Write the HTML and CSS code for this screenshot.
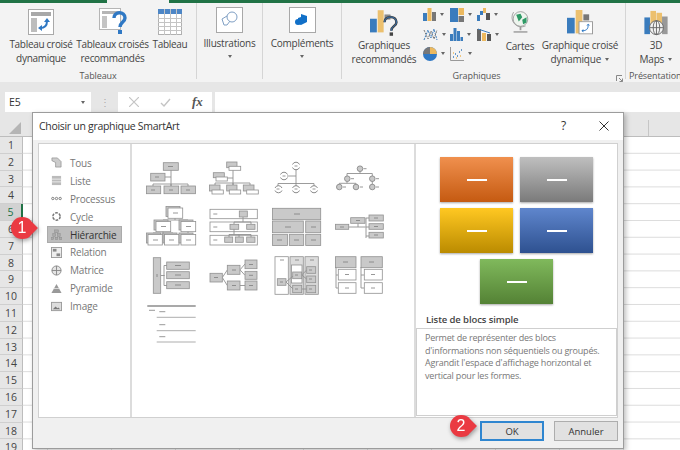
FILE: index.html
```html
<!DOCTYPE html>
<html lang="fr">
<head>
<meta charset="utf-8">
<title>Choisir un graphique SmartArt</title>
<link rel="stylesheet" href="styles.css">
</head>
<body>
<div class="app">
  <div class="greenbar"><div class="g1"></div><div class="g2"></div></div>
  <div class="ribbon">
    <div class="group g-tab">
      <div class="btns">
        <div class="btn b1">
          <svg width="26" height="26" viewBox="0 0 26 26"><rect x=".5" y=".5" width="25" height="25" fill="#fff" stroke="#a9a9a9"/><rect x="3" y="3" width="20" height="4" fill="#a8a8a8"/><rect x="3" y="9" width="6" height="14" fill="#bdbdbd"/><path d="M12 19c5 0 7-3 7-7" fill="none" stroke="#2f78c4" stroke-width="2"/><path d="M16 13l3-4 3 4zM14 16l-4 3 4 3z" fill="#2f78c4"/></svg>
          <span>Tableau croisé<br>dynamique</span>
        </div>
        <div class="btn b2">
          <svg width="28" height="28" viewBox="0 0 28 28"><rect x=".5" y=".5" width="21" height="21" fill="#fff" stroke="#b5b5b5"/><rect x="3" y="3" width="17" height="3" fill="#b5b5b5"/><rect x="3" y="8" width="5" height="12" fill="#c4c4c4"/><path d="M15 10c0-7 11-7 11 0 0 4-5 4-5 9" fill="none" stroke="#2f78c4" stroke-width="3.4"/><rect x="19" y="22" width="4" height="4" fill="#2f78c4"/></svg>
          <span>Tableaux croisés<br>recommandés</span>
        </div>
        <div class="btn b3">
          <svg width="24" height="26" viewBox="0 0 24 26"><rect x=".5" y=".5" width="23" height="25" fill="#fff" stroke="#b0b0b0"/><rect width="24" height="5" fill="#4d86c6"/><path d="M0 9.500h24M0 13.500h24M0 17.500h24M0 21.500h24M6.500 0v26M12.500 0v26M18.500 0v26" stroke="#c4c4c4"/></svg>
          <span>Tableau</span>
        </div>
      </div>
      <div class="glabel">Tableaux</div>
    </div>
    <div class="group g-ill">
      <div class="btn b4">
        <div class="boxic"><svg width="18" height="18" viewBox="0 0 18 18"><path d="M1 8l5-3 3 5-3 4H3z" fill="#fff" stroke="#7f9fc4"/><circle cx="11" cy="6" r="5" fill="#fff" stroke="#7f9fc4"/></svg></div>
        <span>Illustrations</span><i class="caret"></i>
      </div>
    </div>
    <div class="group g-com">
      <div class="btn b5">
        <div class="boxic"><svg width="14" height="14" viewBox="0 0 14 14"><path d="M6 1l6 2v6l-6 3-3-1V5l3-1z" fill="#1170c8"/><circle cx="3" cy="9" r="3" fill="#1170c8"/></svg></div>
        <span>Compléments</span><i class="caret"></i>
      </div>
    </div>
    <div class="group g-gra">
      <div class="btns">
        <div class="btn b6">
          <svg width="29" height="26" viewBox="0 0 34 30"><rect x="0" y="10" width="8" height="16" fill="#3a7cbd"/><rect x="9" y="0" width="7" height="26" fill="#ecc06e"/><rect x="17" y="5" width="7" height="6" fill="#8a8a8a"/><path d="M17 14c0-8 14-8 14 0 0 5-6 4-6 10" fill="none" stroke="#444" stroke-width="3"/><path d="M17 14c0-8 14-8 14 0 0 5-6 4-6 10" fill="none" stroke="#2f78c4" stroke-width="1"/><rect x="23" y="26" width="4" height="4" fill="#444"/></svg>
          <span>Graphiques<br>recommandés</span>
        </div>
        <div class="minis">
          <div class="mini"><svg width="13" height="13" viewBox="0 0 13 13"><rect y="5" width="4" height="8" fill="#3a7cbd"/><rect x="4.500" width="4" height="13" fill="#ecb95f"/><rect x="9" y="4" width="4" height="9" fill="#777"/></svg><i class="caret"></i></div>
          <div class="mini"><svg width="14" height="14" viewBox="0 0 14 14"><rect width="8" height="14" fill="#3a7cbd"/><rect x="8.500" width="5.500" height="7" fill="#ecb95f"/><rect x="8.500" y="8" width="5.500" height="6" fill="#777"/></svg><i class="caret"></i></div>
          <div class="mini"><svg width="13" height="13" viewBox="0 0 13 13"><rect y="7" width="3" height="6" fill="#3a7cbd"/><rect x="3" y="3" width="3" height="4" fill="#3a7cbd"/><rect x="6" width="3" height="5" fill="#ecb95f"/><rect x="9" y="5" width="4" height="7" fill="#555"/></svg><i class="caret"></i></div>
          <div class="mini"><svg width="15" height="13" viewBox="0 0 15 13"><path d="M1 12L5 2l3 8 3-9 3 11" fill="none" stroke="#3a7cbd" stroke-dasharray="2 1"/><path d="M1 2l4 9 3-8 3 8 3-9" fill="none" stroke="#777" stroke-dasharray="2 1"/></svg><i class="caret"></i></div>
          <div class="mini"><svg width="13" height="13" viewBox="0 0 13 13"><rect y="6" width="3" height="7" fill="#3a7cbd"/><rect x="3.500" width="3" height="13" fill="#3a7cbd"/><rect x="7" y="3" width="3" height="10" fill="#3a7cbd"/><rect x="10.500" y="9" width="2.500" height="4" fill="#3a7cbd"/></svg><i class="caret"></i></div>
          <div class="mini"><svg width="14" height="13" viewBox="0 0 14 13"><rect y="1" width="4" height="12" fill="#666"/><rect x="5" y="5" width="4" height="8" fill="#ecb95f"/><rect x="10" y="6" width="4" height="7" fill="#555"/><path d="M1 1l12 4" stroke="#3a7cbd"/></svg><i class="caret"></i></div>
          <div class="mini"><svg width="14" height="14" viewBox="0 0 14 14"><circle cx="7" cy="7" r="7" fill="#2f78c4"/><path d="M7 7V0a7 7 0 0 1 7 7z" fill="#ecb95f"/><path d="M7 7H0a7 7 0 0 1 7-7z" fill="#777"/></svg><i class="caret"></i></div>
          <div class="mini"><svg width="14" height="14" viewBox="0 0 14 14"><path d="M.5 0v13.500H14" fill="none" stroke="#999"/><path d="M3 10h1M5 7h1M7 9h1M9 5h1M11 3h1" stroke="#3a7cbd" stroke-width="1.500"/><path d="M3 6h1M6 11h1M10 9h1" stroke="#ecb95f" stroke-width="1.500"/></svg><i class="caret"></i></div>
        </div>
        <div class="btn b7">
          <svg width="19" height="24" viewBox="0 0 22 27"><circle cx="11" cy="10" r="8.500" fill="#eef5ee" stroke="#999"/><path d="M6 5l5-1 2 4-4 5zM13 11l5-3 0 6-4 2z" fill="#2e9a66"/><path d="M3 2a11 11 0 0 0 14 16" fill="none" stroke="#999"/><path d="M11 19v4" stroke="#999" stroke-width="2"/><rect x="3" y="24" width="16" height="2" fill="#aaa"/></svg>
          <span>Cartes</span><i class="caret"></i>
        </div>
        <div class="btn b8">
          <svg width="26" height="26" viewBox="0 0 27 30" preserveAspectRatio="none"><rect y="9" width="8" height="18" fill="#3a7cbd"/><rect x="9" width="7" height="27" fill="#ecc06e"/><rect x="17" y="5" width="6" height="7" fill="#777"/><rect x="12.500" y="13.500" width="14" height="14" fill="#fff" stroke="#999"/><path d="M16 24c4 0 6-2 6-6" fill="none" stroke="#2f78c4"/><path d="M20 18l2-2 2 2zM17 22l-2 2 2 2z" fill="#2f78c4"/></svg>
          <span>Graphique croisé<br>dynamique <i class="caret inl"></i></span>
        </div>
      </div>
      <div class="glabel gl-gra">Graphiques</div>
      <svg class="launch" width="7" height="7" viewBox="0 0 7 7"><path d="M.5 6V.5H6M3 3l3.500 3.500M3.500 6.500h3v-3" fill="none" stroke="#888"/></svg>
    </div>
    <div class="group g-pre">
      <div class="btns">
        <div class="btn b9">
          <svg width="24" height="26" viewBox="0 0 25 28"><rect y="8" width="6" height="18" fill="#3a7cbd"/><rect x="6.500" y="1" width="6" height="14" fill="#ecc06e"/><rect x="13" y="3" width="6" height="12" fill="#ecc06e"/><rect x="19" y="7" width="6" height="19" fill="#999"/><circle cx="13" cy="19" r="7.500" fill="#f3f3f3" stroke="#666"/><path d="M5.500 19h15M13 11.500v15" stroke="#666"/><ellipse cx="13" cy="19" rx="3.500" ry="7.500" fill="none" stroke="#666"/></svg>
          <span>3D<br>Maps <i class="caret inl"></i></span>
        </div>
      </div>
      <div class="glabel gl-pre">Présentations</div>
    </div>
  </div>
  <div class="band"></div>
  <div class="fbar">
    <div class="namebox"><span>E5</span><i class="caret"></i></div>
    <div class="dots">⋮</div>
    <div class="fbtns">
      <svg width="10" height="10" viewBox="0 0 10 10"><path d="M0 0l10 10M10 0L0 10" stroke="#c4c4c4" stroke-width="1.200"/></svg>
      <svg width="11" height="9" viewBox="0 0 11 9"><path d="M1 5l3 3 6-7" fill="none" stroke="#c4c4c4" stroke-width="1.400"/></svg>
      <span class="fx">fx</span>
    </div>
    <div class="finput"></div>
  </div>
  <div class="colhead"><div class="corner"></div></div>
  <div class="sheet">
    <div class="rows">
      <div>1</div><div>2</div><div>3</div><div>4</div><div class="sel">5</div><div>6</div><div>7</div><div>8</div><div>9</div><div>10</div><div>11</div><div>12</div><div>13</div><div>14</div><div>15</div><div>16</div><div>17</div><div>18</div><div>19</div>
    </div>
    <div class="cells"></div>
  </div>

  <div class="dialog">
    <div class="dtitle"><span class="dt">Choisir un graphique SmartArt</span><span class="help">?</span>
      <svg class="close" width="10" height="10" viewBox="0 0 10 10"><path d="M.5.500l9 9M9.500.500l-9 9" stroke="#333"/></svg></div>
    <div class="dpanel">
      <div class="cats">
        <div class="cat"><svg viewBox="0 0 12 12"><path d="M1 1h6l4 4v6H5V6L1 4z" fill="#ccc" stroke="#888" stroke-width=".7"/></svg>Tous</div>
        <div class="cat"><svg viewBox="0 0 12 12"><rect x="1" y="1" width="10" height="10" fill="#bbb"/><path d="M1 4.500h10M1 7.500h10" stroke="#eee"/></svg>Liste</div>
        <div class="cat"><svg viewBox="0 0 12 12"><circle cx="2" cy="6" r="1.300" fill="none" stroke="#777"/><circle cx="6" cy="6" r="1.300" fill="none" stroke="#777"/><circle cx="10" cy="6" r="1.300" fill="none" stroke="#777"/></svg>Processus</div>
        <div class="cat"><svg viewBox="0 0 12 12"><circle cx="6" cy="6" r="4" fill="none" stroke="#777" stroke-width="1.600" stroke-dasharray="3 1.200"/></svg>Cycle</div>
        <div class="cat on"><svg viewBox="0 0 12 12"><g fill="#aaa" stroke="#888" stroke-width=".5"><rect x="4" y="1" width="4" height="3"/><rect x="2" y="5" width="3" height="3"/><rect x="7" y="5" width="3" height="3"/><rect x="0" y="9" width="3" height="2.500"/><rect x="4.500" y="9" width="3" height="2.500"/><rect x="9" y="9" width="3" height="2.500"/></g></svg>Hiérarchie</div>
        <div class="cat"><svg viewBox="0 0 12 12"><rect x=".5" y=".5" width="11" height="11" fill="#eee" stroke="#999"/><rect x="2" y="2" width="4" height="3" fill="#888"/><rect x="6" y="7" width="4" height="3" fill="#888"/></svg>Relation</div>
        <div class="cat"><svg viewBox="0 0 12 12"><circle cx="6" cy="6" r="5" fill="#e4e4e4" stroke="#888"/><path d="M1 6h10M6 1v10" stroke="#888"/></svg>Matrice</div>
        <div class="cat"><svg viewBox="0 0 12 12"><path d="M6 1l5.500 10H.5z" fill="#999"/><path d="M3 6h6" stroke="#ddd"/></svg>Pyramide</div>
        <div class="cat"><svg viewBox="0 0 12 12"><rect x=".5" y="1.500" width="11" height="9" fill="#ddd" stroke="#999"/><path d="M2 9l3-3 2 2 1-1 2 2z" fill="#777"/></svg>Image</div>
      </div>
      <div class="gallery">
        <svg class="th" viewBox="0 0 50 40"><path class="l" d="M25 13v16M7 29v-2h35v2M25 27v2M19 20h6"/><rect class="b" x="17.300" y="5.700" width="15" height="7.600"/><rect class="b" x="4.700" y="16.300" width="14.300" height="7.700"/><rect class="b" x=".5" y="29" width="14.200" height="7.700"/><rect class="b" x="18" y="29" width="14.700" height="7.700"/><rect class="b" x="35" y="29" width="14.500" height="7.700"/><path class="d" d="M22 9.500h5M9 20h4M5 33h4M23 33h4M40 33h4"/></svg>
        <svg class="th" viewBox="0 0 50 40"><path class="l" d="M24 11v17M6 28v-2h35v2M24 26v2M16 21h8"/><rect class="b" x="17.700" y="5" width="10.300" height="5.700"/><rect class="w" x="20" y="9.300" width="11.700" height="4"/><rect class="b" x="4.300" y="15.700" width="11" height="5"/><rect class="w" x="7" y="20" width="11.300" height="4"/><rect class="b" x=".5" y="28" width="10.500" height="6"/><rect class="w" x="3" y="33" width="11.300" height="4"/><rect class="b" x="17.700" y="28" width="10.300" height="6"/><rect class="w" x="20.300" y="33" width="11.400" height="4"/><rect class="b" x="34.300" y="28" width="10.700" height="6"/><rect class="w" x="37.700" y="33" width="11.600" height="4"/></svg>
        <svg class="th" viewBox="0 0 50 40"><path class="l" d="M24 12v15M6 29v-2.500h36V29M24 26v3M15 19h9"/><path class="a" d="M20.500 7.500a3.800 3.800 0 0 1 7 0M20.500 10.500a3.800 3.800 0 0 0 7 0M8.500 17.500a3.800 3.800 0 0 1 7 0M8.500 20.500a3.800 3.800 0 0 0 7 0M3 31a3.800 3.800 0 0 1 7 0M3 33.500a3.800 3.800 0 0 0 7 0M20.500 31a3.800 3.800 0 0 1 7 0M20.500 33.500a3.800 3.800 0 0 0 7 0M38.500 31a3.800 3.800 0 0 1 7 0M38.500 33.500a3.800 3.800 0 0 0 7 0"/><path class="d" d="M22.500 9h3M10.500 19h3M4.500 32h3M22.500 32h3M40.500 32h3"/></svg>
        <svg class="th" viewBox="0 0 50 40"><path class="l" d="M25 12v4.500M12 21v-4.500h25.300V21M12 22v4.300M4.300 30v-3.700h16.700V30M37.300 22v8"/><g class="c"><circle cx="25" cy="11.700" r="2.800"/><circle cx="12.300" cy="21.700" r="2.800"/><circle cx="37.300" cy="21.700" r="2.800"/><circle cx="4.300" cy="30" r="2.800"/><circle cx="21" cy="30" r="2.800"/><circle cx="37.300" cy="30" r="2.800"/></g><path class="d" d="M28.500 11.700h3M16 21.700h3M41 21.700h3M8 30h3M25 30h3M41 30h3"/></svg>

        <svg class="th" viewBox="0 0 50 40"><path class="l" d="M29 12v2M17 17v-3h25v3M17 25v2M7 29v-2h20v2M17 27v2M42 25v3"/><rect class="b" x="20" y=".5" width="14" height="10"/><rect class="w" x="22" y="2" width="14.700" height="10.300"/><rect class="b" x="8" y="14" width="14" height="10"/><rect class="w" x="10" y="15.500" width="14.700" height="10.200"/><rect class="b" x="33" y="14" width="14" height="10"/><rect class="w" x="35" y="15.500" width="14.700" height="10.200"/><rect class="b" x=".5" y="27" width="14" height="10"/><rect class="w" x="2" y="28.500" width="14.300" height="10.500"/><rect class="b" x="17" y="27" width="14" height="10"/><rect class="w" x="18.500" y="28.500" width="14.500" height="10.500"/><rect class="b" x="33" y="27" width="14" height="10"/><rect class="w" x="35" y="28.500" width="14.700" height="10.500"/><path class="d" d="M27 7h5M15 20.500h5M40 20.500h5M7 34h5M23 34h5M40 34h5"/></svg>
        <svg class="th" viewBox="0 0 50 40"><rect class="w" x="1" y="3.300" width="47.300" height="9.400"/><rect class="w" x="1" y="16" width="47.300" height="9.700"/><rect class="w" x="1" y="29.300" width="47.300" height="9.700"/><path class="l" d="M34 11v5M25 18v-2h17v2M25 23v5.500M20 31v-2.500h22V31M30 28.500V31"/><rect class="b" x="30.300" y="5" width="8" height="6"/><rect class="b" x="21" y="18.300" width="8.700" height="5"/><rect class="b" x="37.700" y="18.300" width="8.300" height="5"/><rect class="b" x="15.700" y="31" width="8" height="5.300"/><rect class="b" x="26.300" y="31" width="8" height="5.300"/><rect class="b" x="37.700" y="31" width="8.300" height="5.300"/><path class="d" d="M4.300 8h4M4.300 21h4M4.300 34h4"/></svg>
        <svg class="th" viewBox="0 0 50 40"><rect class="b" x=".5" y="2.300" width="48.200" height="11.400"/><rect class="b" x=".5" y="15" width="30.800" height="11.700"/><rect class="b" x="33.700" y="15" width="15" height="11.700"/><rect class="b" x=".5" y="28.300" width="15" height="11.200"/><rect class="b" x="17.300" y="28.300" width="14.400" height="11.200"/><rect class="b" x="33.700" y="28.300" width="15" height="11.200"/><path class="d" d="M22 8h6M13 21h6M39 21h5M5 34h5M22 34h5M39 34h5"/></svg>
        <svg class="th" viewBox="0 0 50 40"><path class="l" d="M13.700 21h17M23 17.300V21M31 12v20M31 12h3M31 21h3M31 30h3"/><rect class="b" x=".5" y="18.300" width="13.200" height="5"/><rect class="b" x="15.700" y="11.700" width="14.300" height="5.600"/><rect class="b" x="34" y="9" width="14.300" height="6"/><rect class="b" x="34" y="17.700" width="14.300" height="5.600"/><rect class="b" x="34" y="26.300" width="14.300" height="5.700"/><path class="d" d="M5 21h4M21 14.500h4M39 12h4M39 20.500h4M39 29h4"/></svg>

        <svg class="th" viewBox="0 0 50 40"><path class="l" d="M14.700 20.500h4M18 10.500v20M18 10.500h3M18 30.500h3"/><rect class="b" x="7.300" y="2.700" width="7.400" height="35.600"/><rect class="b" x="20.700" y="7" width="22.600" height="7.300"/><rect class="b" x="20.700" y="16.700" width="22.600" height="7"/><rect class="b" x="20.700" y="26.700" width="22.600" height="7"/><path class="d" d="M11 19v3M29 10.500h6M29 20h6M29 30h6"/></svg>
        <svg class="th" viewBox="0 0 50 40"><path class="l" d="M13.300 22.500l5-7.500M13.300 22.500l5 8M31 14.800l5-5.800M31 14.800l5 5.500M31 30.500h5"/><rect class="b" x="1" y="18.300" width="12.300" height="8.700"/><rect class="b" x="18.300" y="10.300" width="12.700" height="9"/><rect class="b" x="18.300" y="26" width="12.700" height="9"/><rect class="b" x="36" y="5" width="12" height="8.700"/><rect class="b" x="36" y="16.300" width="12" height="8"/><rect class="b" x="36" y="26" width="12" height="9"/><path class="d" d="M5 22.500h4M23 15h4M23 30.500h4M40 9.500h4M40 20.300h4M40 30.500h4"/></svg>
        <svg class="th" viewBox="0 0 50 40"><rect class="w" x="3" y="1.700" width="13.300" height="37.600"/><rect class="gb" x="18" y="1.700" width="13.300" height="37.600"/><rect class="w" x="19.500" y="10" width="10.500" height="18"/><rect class="gb" x="33" y="1.700" width="13.300" height="37.600"/><path class="l" d="M14 27l7-6M14 27l7 7M29.700 20l5-5M29.700 20l5 4M29.700 34h5"/><rect class="b" x="5.300" y="23.700" width="8.700" height="6.600"/><rect class="b" x="20.700" y="17" width="9" height="6.700"/><rect class="b" x="20.700" y="30.300" width="9" height="7.400"/><rect class="b" x="34.700" y="11.700" width="9" height="6.600"/><rect class="b" x="34.700" y="21" width="9" height="6.700"/><rect class="b" x="34.700" y="30.300" width="9" height="7.400"/><path class="d" d="M8 5h4M23 5h4M38 5h4M8 27h3M23 20h3M23 34h3M37 15h3M37 24h3M37 34h3"/></svg>
        <svg class="th" viewBox="0 0 50 40"><path class="l" d="M1 12v21h2M1 20h2M26 12v21h3M26 20h3"/><rect class="b" x=".5" y="1.700" width="20.500" height="11"/><rect class="b" x="26" y="1.700" width="21.300" height="11"/><rect class="w" x="3.300" y="14.300" width="17.700" height="10.700"/><rect class="w" x="3.300" y="27.700" width="17.700" height="10.600"/><rect class="w" x="29.300" y="14.300" width="18" height="10.700"/><rect class="w" x="29.300" y="27.700" width="18" height="10.600"/><path class="d" d="M8 7h5M34 7h5M10 19.500h4M10 33h4M36 19.500h4M36 33h4"/></svg>

        <svg class="th" viewBox="0 0 50 40"><path class="tl" d="M1.300 2h48.400"/><path class="l2" d="M10.700 13.300h39M10.700 26.700h39M10.700 38h39"/><path class="d" d="M3 6.300h6M13.300 7.700h6M13.300 20.700h6M13.300 32.700h6"/></svg>
      </div>
      <div class="detail">
        <div class="prev">
          <div class="prow"><div class="pb orange"><i></i></div><div class="pb gray"><i></i></div></div>
          <div class="prow"><div class="pb yellow"><i></i></div><div class="pb blue"><i></i></div></div>
          <div class="prow"><div class="pb green"><i></i></div></div>
        </div>
        <div class="dname">Liste de blocs simple</div>
        <div class="ddesc">Permet de représenter des blocs<br>d'informations non séquentiels ou groupés.<br>Agrandit l'espace d'affichage horizontal et<br>vertical pour les formes.</div>
      </div>
    </div>
    <div class="dfoot"><button class="ok">OK</button><button class="cancel">Annuler</button></div>
  </div>

  <div class="badge b-1"><svg width="44" height="32" viewBox="0 0 44 32"><path d="M6 16a11 11 0 0 1 11-11c4 0 7 1 9 4l7 7-7 7c-2 3-5 4-9 4A11 11 0 0 1 6 16z" fill="#ea3a42"/></svg><span>1</span></div>
  <div class="badge b-2"><svg width="44" height="32" viewBox="0 0 44 32"><path d="M6 16a11 11 0 0 1 11-11c4 0 7 1 9 4l7 7-7 7c-2 3-5 4-9 4A11 11 0 0 1 6 16z" fill="#ea3a42"/></svg><span>2</span></div>
</div>
</body>
</html>
```
FILE: styles.css
```css
*{box-sizing:border-box}
html,body{margin:0;padding:0}
body{font-family:"Open Sans","Noto Sans",sans-serif;color:#444;background:#fff}
.app{position:relative;width:680px;height:450px;overflow:hidden;display:flex;flex-direction:column}
.greenbar{height:3px;display:flex;flex:none;background:#f3f3f3}
.g1{width:107px;background:#217346}
.g2{margin-left:62px;flex:1;background:#217346}
.ribbon{height:79px;flex:none;background:#f3f3f3;display:flex;font-size:10px;letter-spacing:-.22px;line-height:14px;color:#444}
.group{position:relative;display:flex;flex-direction:column;border-right:1px solid #d5d5d5;margin-bottom:3px;flex:none}
.g-tab{width:197px;letter-spacing:-.3px}
.g-ill{width:66px}
.g-com{width:79px}
.g-gra{width:284px}
.g-pre{flex:1;border-right:0}
.btns{display:flex;flex:1;min-height:0}
.btn{display:flex;flex-direction:column;align-items:center;text-align:center;white-space:nowrap;flex:none}
.btn svg{flex:none}
.btn>span{display:block}
.glabel{text-align:center;font-size:9px;line-height:12px;color:#555;height:13px;letter-spacing:-.1px;margin-bottom:-4px;flex:none}
.gl-gra{padding-right:14px}
.gl-pre{text-align:left;padding-left:3px;white-space:nowrap}
.b1{width:74px;padding-top:6px;padding-left:8px}
.b1 span{margin-top:2px}
.b2{width:77px;padding-top:5px}
.b2 span{margin-top:1px}
.b3{width:38px;padding-top:6px}
.b3 span{margin-top:2px}
.b4,.b5{width:100%;padding-top:4px}
.boxic{width:27px;height:26px;background:#fff;border:1px solid #a8a8a8;display:flex;align-items:center;justify-content:center;margin-bottom:3px}
.caret{display:block;width:0;height:0;border:2.500px solid transparent;border-top:3px solid #666;border-bottom:0;margin-top:5px}
.caret.inl{display:inline-block;margin:0 0 2px 2px;vertical-align:middle}
.b6{width:74px;padding:7px 0 0 10px}
.b6 span{margin-top:2px}
.minis{width:87px;padding:2px 0 0 7px;display:grid;grid-template-columns:27px 27px 27px;grid-auto-rows:19.500px;align-content:start}
.mini{display:flex;align-items:center;gap:4px}
.mini .caret{margin-top:0}
.b7{width:34px;padding-top:7px}
.b7 span{margin-top:5px}
.b8{width:86px;padding-top:7px}
.b8 span{margin-top:2px}
.launch{position:absolute;right:2px;bottom:-3px}
.b9{width:54px;padding:7px 0 0 6px}
.b9 span{margin-top:2px}
.band{height:10px;flex:none;background:#e6e6e6}
.fbar{height:20px;flex:none;background:#e6e6e6;display:flex;font-size:10px;letter-spacing:-.1px;align-items:stretch}
.namebox{width:86px;margin-left:5px;background:#fff;display:flex;align-items:center;justify-content:space-between;padding:0 6px 0 4px;color:#333;font-size:10.500px}
.namebox .caret{margin-top:0}
.dots{width:27px;text-align:center;color:#aaa;line-height:20px}
.fbtns{width:94px;background:#fff;display:flex;align-items:center;gap:21px;padding-left:11px}
.fx{font-family:"Liberation Serif",serif;font-style:italic;font-size:13px;color:#555;font-weight:bold}
.finput{flex:1;margin-left:3px;background:#fff}
.colhead{height:25px;flex:none;background-color:#e6e6e6;background-image:linear-gradient(#c6c6c6,#c6c6c6);background-size:1px 17px;background-position:648px 8px;background-repeat:no-repeat;border-bottom:1px solid #bdbdbd;position:relative}
.corner{position:absolute;left:9px;bottom:2px;width:0;height:0;border-style:solid;border-width:0 0 12px 12px;border-color:transparent transparent #b5b5b5 transparent}
.sheet{flex:1;display:flex;min-height:0}
.rows{width:23px;flex:none;background:#e6e6e6;font-size:10.500px;color:#444}
.rows div{height:16.800px;line-height:16px;text-align:center;border-bottom:1px solid #cfcfcf;border-right:1px solid #bdbdbd}
.rows .sel{background:#d2d2d2;color:#217346;border-right:2px solid #217346}
.cells{flex:1;background-color:#fff;background-image:linear-gradient(#dcdcdc 1px,transparent 1px),linear-gradient(90deg,#e2e2e2 1px,transparent 1px);background-size:100% 16.800px,64px 100%;background-position:0 15.800px,24px 0}

.dialog{position:absolute;left:32px;top:112px;width:592px;height:337px;background:#f0f0f0;border:1px solid #9c9c9c;box-shadow:2px 2px 5px rgba(0,0,0,.25);display:flex;flex-direction:column;padding:0 5px}
.dtitle{height:27px;margin:0 -5px 3px;flex:none;background:#fff;padding:0 14px 2px 6px;display:flex;align-items:center;font-size:10.500px;letter-spacing:-.3px;color:#333;position:relative}
.dt{flex:1}
.help{margin-right:33px;font-size:12px}
.dpanel{height:275px;flex:none;background:#fff;border:1px solid #d0d0d0;display:flex}
.cats{width:93px;flex:none;border-right:2px solid #dcdcdc;padding:10px 8px 0 8px;font-size:10px;letter-spacing:-.2px;color:#777}
.cat{height:17.900px;display:flex;align-items:center;gap:8px;padding-left:4px}
.cat svg{width:11px;height:11px;flex:none}
.cat.on{background:#bdbdbd;color:#333;border:1px solid #ababab;padding-left:3px}
.gallery{width:284px;flex:none;border-right:2px solid #dcdcdc;padding:13px 0 0 14px;display:grid;grid-template-columns:repeat(4,50px);grid-auto-rows:40px;column-gap:13px;row-gap:9px;align-content:start;filter:blur(.3px)}
.th{width:50px;height:40px;display:block;overflow:visible}
.b{fill:#c9c9c9;stroke:#919191;stroke-width:.8}
.w{fill:#fff;stroke:#919191;stroke-width:.8}
.gb{fill:#dcdcdc;stroke:#919191;stroke-width:.8}
.l{fill:none;stroke:#919191;stroke-width:.9}
.a{fill:none;stroke:#8a8a8a;stroke-width:1}
.c circle{fill:#c9c9c9;stroke:#8a8a8a;stroke-width:.9}
.d{fill:none;stroke:#7d7d7d;stroke-width:.8}
.tl{fill:none;stroke:#8c8c8c;stroke-width:1.600}
.l2{fill:none;stroke:#adadad;stroke-width:1}
.detail{flex:1;display:flex;flex-direction:column;min-width:0}
.prev{height:169px;flex:none;padding-top:13px;display:flex;flex-direction:column;gap:6px;align-items:center}
.prow{display:flex;gap:7px}
.pb{width:73px;height:45px;display:flex;align-items:center;justify-content:center;box-shadow:0 1px 2px rgba(0,0,0,.35)}
.pb i{width:20px;height:2px;background:#fff;display:block}
.orange{background:linear-gradient(#f0904e,#c55a11)}
.gray{background:linear-gradient(#bfbfbf,#7a7a7a)}
.yellow{background:linear-gradient(#ffc822,#bb8b00)}
.blue{background:linear-gradient(#5f86cd,#2e5190)}
.green{background:linear-gradient(#80b95c,#548235)}
.dname{font-weight:600;font-size:9.500px;letter-spacing:-.1px;color:#444;padding-left:10px;line-height:14px;height:15px}
.ddesc{margin:0 0 1px 0;flex:1;border:1px solid #cfcfcf;padding:3px 8px;font-size:9px;line-height:12.700px;letter-spacing:-.2px;color:#777;white-space:nowrap}
.dfoot{flex:1;display:flex;justify-content:flex-end;gap:10px;padding-top:3px;align-items:flex-start}
.dfoot button{width:64px;height:20px;font-family:inherit;font-size:9.500px;color:#333;background:#e1e1e1;border:1px solid #adadad;padding:0}
.dfoot .ok{border:2px solid #2f86d0}
.badge{position:absolute;width:44px;height:32px;filter:drop-shadow(1px 2px 2px rgba(0,0,0,.35))}
.badge span{position:absolute;left:6px;top:0;width:22px;line-height:32px;text-align:center;color:#fff;font-size:16px;font-family:"Liberation Sans",sans-serif}
.b-1{left:5px;top:212px}
.b-2{left:444px;top:410px}
```
